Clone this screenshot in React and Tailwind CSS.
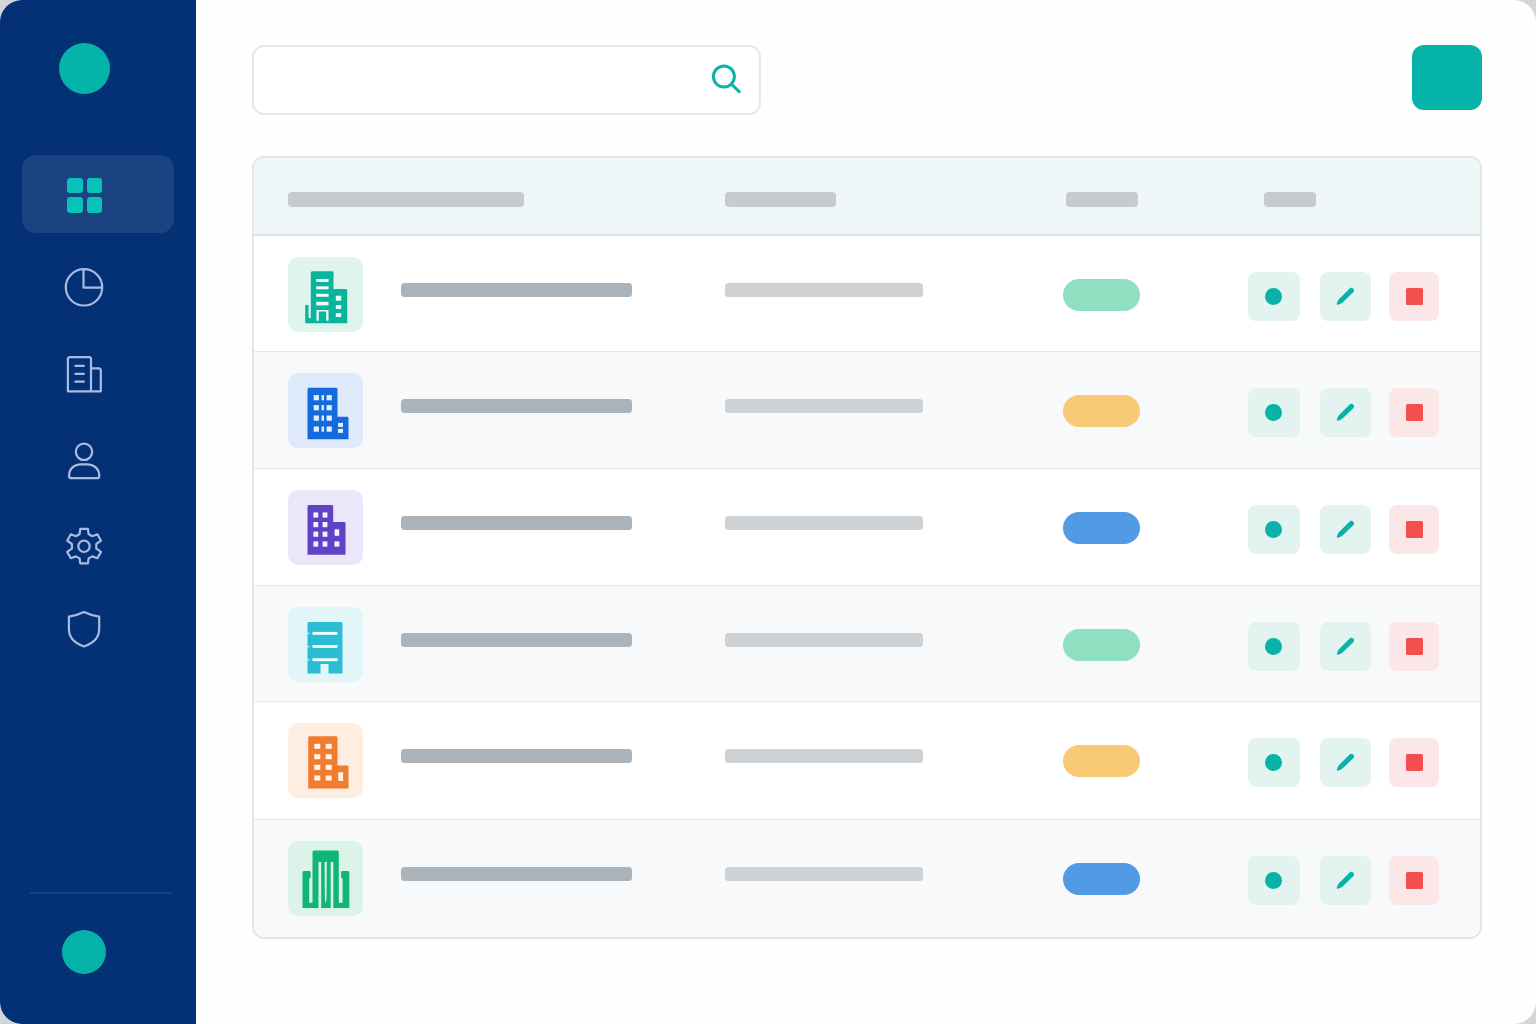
import React from "react";
import clsx from "clsx";

function Windows({ xs, ys, w, h }) {
  return xs.flatMap((x) =>
    ys.map((y) => <rect key={`${x}-${y}`} x={x} y={y} width={w} height={h} />)
  );
}

function TealBuilding() {
  return (
    <>
      <path
        fill="currentColor"
        d="M23.8 14.3H44.5L45.5 15.3V32H58.2L59.2 33V66.3H17.2V48H20.5V61H22.8V15.3Z"
      />
      <g className="fill-[#f0fbf7]">
        <Windows xs={[28.2]} ys={[22, 29.3, 36.8]} w={12.4} h={3} />
        <rect x="28.2" y="44.8" width="12.4" height="3.6" />
        <path d="M28.5 53H40.5V63.7H38.2V54.5H30.8V63.7H28.5Z" />
        <rect x="47.8" y="38.7" width="5.4" height="5" />
        <Windows xs={[47.8]} ys={[48, 56]} w={5.4} h={4} />
      </g>
    </>
  );
}

function BlueBuilding() {
  return (
    <>
      <path
        fill="currentColor"
        d="M20.5 14.7H48.5L49.5 15.7V43.7H59.5L60.5 44.7V66.3H19.5V15.7Z"
      />
      <g className="fill-[#e3efff]">
        <Windows xs={[25.7, 38.6]} ys={[22.1, 32.1, 42.5, 53.5]} w={5.2} h={5.2} />
        <Windows xs={[33.6]} ys={[22.1, 32.1, 42.5, 53.5]} w={2.4} h={5.2} />
        <Windows xs={[50]} ys={[49.9, 55.9]} w={5} h={4} />
      </g>
    </>
  );
}

function PurpleBuilding() {
  return (
    <>
      <path
        fill="currentColor"
        d="M20.5 15H44.2L45.2 16V32H56.5L57.5 33V64.7H19.5V16Z"
      />
      <g className="fill-[#f4f0ff]">
        <Windows xs={[25.4, 34.6]} ys={[22.4, 32, 41.6, 51.4]} w={4.8} h={5.2} />
        <rect x="46.6" y="39.3" width="4.6" height="6.5" />
        <rect x="46.4" y="51.4" width="5" height="5.2" />
      </g>
    </>
  );
}

function CyanBuilding() {
  return (
    <>
      <path
        fill="currentColor"
        d="M20.5 15H53.5L54.5 16V66.5H40.5V57H32.5V66.5H19.5V16Z"
      />
      <g className="fill-[#f4feff]">
        <Windows xs={[24.5]} ys={[24.9, 38, 51.3]} w={25} h={2.9} />
        <Windows xs={[19.5]} ys={[26, 39, 52.3]} w={2} h={0.9} />
      </g>
    </>
  );
}

function OrangeBuilding() {
  return (
    <>
      <path
        fill="currentColor"
        d="M21.2 13.2H48.5L49.5 14.2V42.5H59.5L60.5 43.5V65.5H20.2V14.2Z"
      />
      <g className="fill-[#fff5ea]">
        <Windows xs={[26.3, 37.7]} ys={[20.8, 31.2, 41.8, 52.5]} w={6} h={5} />
        <rect x="50.3" y="49.3" width="4.8" height="8.7" />
      </g>
    </>
  );
}

function GreenBuilding() {
  return (
    <>
      <path
        fill="currentColor"
        d="M25.5 9.4H49.8L50.8 10.4V61.7H54.6V37.5L53 36.8V31L54 30H60.3L61.3 31V67H45.3V21H42.7V67H33.2V21H30.5V67H14.5V31L15.5 30H21.7L22.7 31V36.8L21.2 37.5V61.7H24.5V10.4Z"
      />
      <path className="fill-[#dcf8ea]" d="M36.6 21H38.8L38.5 57L37.9 62H37.5L36.9 57Z" />
    </>
  );
}

const PILL = {
  green: "bg-[#8ee0c0]",
  yellow: "bg-[#f9ca76]",
  blue: "bg-[#539ae5]",
};

const ROWS = [
  { id: 1, Icon: TealBuilding, tile: "bg-[#e0f4ee] text-[#07b59c]", status: "green", height: "h-[116px]" },
  { id: 2, Icon: BlueBuilding, tile: "bg-[#deeafb] text-[#146be0]", status: "yellow", height: "h-[117px]" },
  { id: 3, Icon: PurpleBuilding, tile: "bg-[#ebe7fa] text-[#6042c6]", status: "blue", height: "h-[117px]" },
  { id: 4, Icon: CyanBuilding, tile: "bg-[#e0f6f9] text-[#2bbdd4]", status: "green", height: "h-[116px]" },
  { id: 5, Icon: OrangeBuilding, tile: "bg-[#feede1] text-[#f27c2d]", status: "yellow", height: "h-[118px]" },
  { id: 6, Icon: GreenBuilding, tile: "bg-[#dbf3e8] text-[#0fb676]", status: "blue", height: "h-[117px]" },
];

function PieIcon() {
  return (
    <>
      <circle cx="20" cy="20.3" r="18.2" />
      <path d="M19.5 2.2V20.6H38" />
    </>
  );
}

function OfficeIcon() {
  return (
    <>
      <path d="M5 2.2H26L27 3.4V36.3H3.9V3.3Z" />
      <path d="M27.3 13.4H35.4L36.8 14.8V36.3H27.3" />
      <path d="M10.5 10.9H20.7M10.5 18.8H20.7M10.5 26.6H20.7" />
    </>
  );
}

function UserIcon() {
  return (
    <>
      <circle cx="20" cy="10.8" r="8.2" />
      <path d="M5.2 35.6C4.6 28 10 23.4 17 23.4H23C30 23.4 35.8 28 35.2 35.6Q35.2 37.2 33.6 37.2H6.8Q5.2 37.2 5.2 35.6Z" />
    </>
  );
}

function GearIcon() {
  return (
    <>
      <path d="M16.3 2.9H23.9L24.6 8L28.3 10.2L33.4 8.3L37 14.7L32.3 18V22.6L37 25.9L33.4 32.2L28.3 30.4L24.6 32.4L23.9 37.3H16.3L15.6 32.4L11.9 30.4L6.8 32.2L3.2 25.9L7.9 22.6V18L3.2 14.7L6.8 8.3L11.9 10.2L15.6 8Z" />
      <circle cx="20" cy="20.3" r="5.7" />
    </>
  );
}

function ShieldIcon() {
  return <path d="M20 3.1Q26.5 6.3 35.2 7.7V20C35.2 29 29 34.4 20 37.5C11 34.4 4.9 29 4.9 20V7.7Q13.5 6.3 20 3.1Z" />;
}

const NAV = [
  { name: "reports", Icon: PieIcon, gap: "mt-[34px]" },
  { name: "companies", Icon: OfficeIcon, gap: "mt-12" },
  { name: "users", Icon: UserIcon, gap: "mt-[46px]" },
  { name: "settings", Icon: GearIcon, gap: "mt-[45px]" },
  { name: "security", Icon: ShieldIcon, gap: "mt-[43px]" },
];

function Sidebar() {
  return (
    <aside className="flex w-[196px] shrink-0 flex-col bg-[#043176]">
      <div className="mt-[42.5px] ml-[58.5px] size-[51.5px] rounded-full bg-[#06b3a8]" />

      <nav className="mt-[61px] flex flex-col">
        <button className="ml-[22px] h-[78px] w-[152px] rounded-[14px] bg-[#1b4281] pt-0.5 pl-[45px]">
          <span className="grid w-[35px] grid-cols-2 gap-1">
            <span className="h-[15.5px] rounded-[3px] bg-[#08c2b8]" />
            <span className="h-[15.5px] rounded-[3px] bg-[#08c2b8]" />
            <span className="h-[15.5px] rounded-[3px] bg-[#08c2b8]" />
            <span className="h-[15.5px] rounded-[3px] bg-[#08c2b8]" />
          </span>
        </button>
        {NAV.map(({ name, Icon, gap }) => (
          <button key={name} className={clsx("ml-16 size-10", gap)}>
            <svg
              viewBox="0 0 40 40"
              className="size-10 fill-none stroke-[#a9bbe0]"
              strokeWidth="2.2"
              strokeLinejoin="round"
            >
              <Icon />
            </svg>
          </button>
        ))}
      </nav>

      <div className="mt-auto mb-[50px]">
        <div className="ml-[30px] h-0.5 w-[142px] bg-[#194284]" />
        <div className="mt-9 ml-[61.5px] size-[44.5px] rounded-full bg-[#06b3a8]" />
      </div>
    </aside>
  );
}

function Toolbar() {
  return (
    <div className="flex items-start justify-between">
      <div className="flex h-[70px] w-[509px] justify-end rounded-xl border-2 border-[#e6e7ea] bg-white pt-[15px] pr-[16px]">
        <svg viewBox="0 0 32 32" className="size-8 fill-none stroke-[#0db3a6]" strokeWidth="3">
          <circle cx="12.9" cy="14.6" r="10.5" />
          <path d="M20.6 22.3L28.2 29.6" strokeLinecap="round" />
        </svg>
      </div>
      <button className="h-[65px] w-[70px] rounded-xl bg-[#05b3a9]" />
    </div>
  );
}

function RowActions() {
  return (
    <div className="mt-9 flex">
      <button className="flex h-[48.5px] w-[51.5px] items-center justify-center rounded-lg bg-[#e3f4f0]">
        <span className="size-[17px] rounded-full bg-[#08b2a6]" />
      </button>
      <button className="ml-[20.5px] flex h-[48.5px] w-[51px] items-center justify-center rounded-lg bg-[#e3f4f0]">
        <svg viewBox="0 0 20 20" className="size-5 fill-[#08b2a6]">
          <path d="M14.2 2.1C16.1 0.7 19.5 3.8 17.5 6L6.8 16.2Q4.5 18.3 1.1 18.7Q0.5 18.4 0.8 17.7Q1.4 14.9 3.1 12.9Z" />
        </svg>
      </button>
      <button className="ml-[18px] flex h-[48.5px] w-[50px] items-center justify-center rounded-lg bg-[#fbe7e7]">
        <span className="size-[17px] rounded-[1.5px] bg-[#f44e4e]" />
      </button>
    </div>
  );
}

function CompanyRow({ row, striped, last }) {
  const { Icon } = row;
  return (
    <div
      className={clsx(
        "grid grid-cols-[113.5px_324px_338px_185px_1fr] items-start pl-[33.5px]",
        row.height,
        striped ? "bg-[#f8f9fa]" : "bg-white",
        !last && "border-b border-[#e6e8ea]"
      )}
    >
      <div className={clsx("mt-[21px] size-[75px] rounded-[10px]", row.tile)}>
        <svg viewBox="0 0 75 75" className="size-[75px]">
          <Icon />
        </svg>
      </div>
      <div className="mt-[47px] h-3.5 w-[231px] rounded-[3.5px] bg-[#acb4bb]" />
      <div className="mt-[47px] h-3.5 w-[198px] rounded-[3.5px] bg-[#cfd2d5]" />
      <div className={clsx("mt-[43px] h-8 w-[77px] rounded-full", PILL[row.status])} />
      <RowActions />
    </div>
  );
}

function CompanyTable() {
  return (
    <section className="mt-[41px] h-[783px] overflow-hidden rounded-xl border-2 border-[#e2e6e9]">
      <div className="grid h-[78px] grid-cols-[437px_341px_198px_1fr] items-start border-b-2 border-[#dce4e6] bg-[#f0f7f8] pt-[34px] pl-[34px]">
        <div className="h-[15px] w-[236px] rounded bg-[#c7cbce]" />
        <div className="h-[15px] w-[111px] rounded bg-[#c7cbce]" />
        <div className="h-[15px] w-[72px] rounded bg-[#c7cbce]" />
        <div className="h-[15px] w-[52px] rounded bg-[#c7cbce]" />
      </div>
      {ROWS.map((row, i) => (
        <CompanyRow key={row.id} row={row} striped={i % 2 === 1} last={i === ROWS.length - 1} />
      ))}
    </section>
  );
}

export default function App() {
  return (
    <div className="h-screen bg-[#d3d5d9]">
      <div className="flex h-full overflow-hidden rounded-[22px] bg-[#fefefe]">
        <Sidebar />
        <main className="flex-1 pt-[45px] pr-[54px] pl-14">
          <Toolbar />
          <CompanyTable />
        </main>
      </div>
    </div>
  );
}
